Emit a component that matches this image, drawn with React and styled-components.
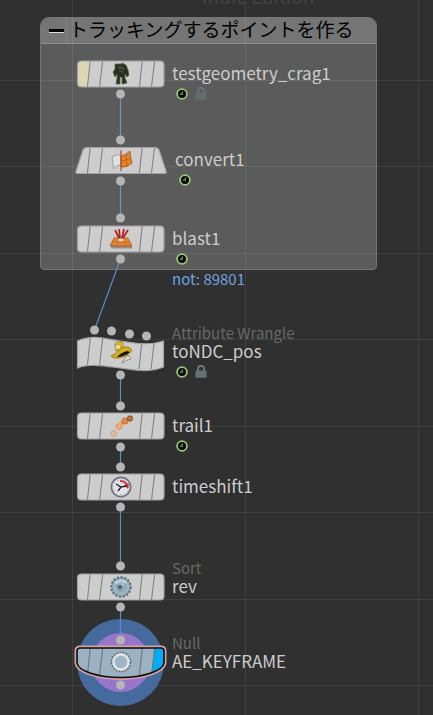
import React from "react";
import styled, { createGlobalStyle } from "styled-components";

const Global = createGlobalStyle`
  * { box-sizing: border-box; }
  body { margin: 0; background: #303030; font-family: "Noto Sans CJK JP", "Noto Sans", sans-serif; }
  button { font: inherit; border: 0; padding: 0; background: none; cursor: pointer; }
`;

const Canvas = styled.main`
  position: relative;
  min-height: 100vh;
  overflow: hidden;
  background: #303030;
`;

const Grid = styled.div`
  position: absolute;
  inset: 0;
  pointer-events: none;
  background-image:
    linear-gradient(rgba(255, 255, 255, 0.07) 1px, transparent 1px),
    linear-gradient(rgba(255, 255, 255, 0.07) 1px, transparent 1px),
    linear-gradient(90deg, rgba(255, 255, 255, 0.08) 1px, transparent 1px);
  background-size: 173px 173px;
  background-position: 0 80px, 0 166px, 72px 0;
`;

const Watermark = styled.div`
  position: absolute;
  top: -18px;
  left: 202px;
  font-size: 19px;
  line-height: 28px;
  color: #434343;
  white-space: nowrap;
`;

const NetworkBox = styled.section`
  position: absolute;
  left: 40px;
  top: 17px;
  width: 337px;
  height: 253px;
  border: 1px solid #747474;
  border-radius: 9px 9px 4px 4px;
  background: #5b5b5b;
`;

const BoxHeader = styled.header`
  display: flex;
  align-items: center;
  height: 26px;
  background: #757575;
  border-bottom: 1px solid #8e8e8e;
  border-radius: 8px 8px 0 0;
`;

const CollapseButton = styled.button`
  display: flex;
  align-items: center;
  justify-content: center;
  flex: none;
  width: 26px;
  height: 25px;
  padding-left: 5px;
  border-right: 1px solid #838383;
`;

const CollapseMark = styled.span`
  width: 15px;
  height: 4px;
  background: #000;
  border-bottom: 1px solid #ddd;
`;

const BoxTitle = styled.h1`
  margin: 0 0 4px 2px;
  font-size: 19px;
  font-weight: 400;
  line-height: 20px;
  color: #000;
  white-space: nowrap;
`;

const Wires = styled.svg`
  position: absolute;
  left: 0;
  top: 0;
  overflow: visible;
  pointer-events: none;
`;

const NodeItem = styled.article`
  position: absolute;
  left: 70px;
  top: ${(p) => p.$y}px;
`;

const NodeButton = styled.button`
  display: block;
  width: 102px;
  height: 40px;
  svg { display: block; overflow: visible; }
`;

const Label = styled.div`
  position: absolute;
  left: ${(p) => (p.$wide ? 105 : 102)}px;
  bottom: 12px;
  display: flex;
  flex-direction: column;
  white-space: nowrap;
  line-height: 18px;
  font-size: 17px;
`;

const NodeType = styled.span`
  color: #686868;
  font-size: 15px;
`;

const NodeName = styled.span`
  color: #cdcdcd;
`;

const Status = styled.div`
  position: absolute;
  left: ${(p) => (p.$wide ? 109 : 106)}px;
  top: 33px;
  display: flex;
  gap: 7px;
  align-items: center;
  height: 13px;
`;

const Info = styled.div`
  position: absolute;
  left: 102px;
  top: 50px;
  font-size: 15px;
  line-height: 20px;
  color: #72a3e0;
  white-space: nowrap;
`;

const Clock = () => (
  <svg width="12" height="12" viewBox="0 0 12 12">
    <circle cx="6" cy="6" r="4.9" fill="#050805" stroke="#98c878" strokeWidth="1.8" />
    <path d="M6.2 3.4V6.2H3.9" fill="none" stroke="#8bb870" strokeWidth="1.1" />
  </svg>
);

const Lock = ({ dim }) => (
  <svg width="12" height="13" viewBox="0 0 12 13" opacity={dim ? 0.75 : 1}>
    <path d="M3 6V3.4Q3 .9 6 .9T9 3.4V6" fill="none" stroke="#777f7f" strokeWidth="1.7" />
    <rect x=".5" y="5.5" width="11" height="7.3" rx=".5" fill="#647474" />
  </svg>
);

const RobotIcon = () => (
  <g stroke="#4f6a35" strokeWidth=".8" strokeLinejoin="round">
    <path fill="#2d2f25" d="M-6-10L0-10 1-11 5-9 7-4 8 1 6 3 4 0 4 4 6 9 1 10 1 3-1 3-1 10-5 10-4 4-4 0-6 3-8-2-6-5Z" />
    <path fill="#4b4d3f" stroke="none" d="M-3-8L2-7 4-4 1-1-2-3Z" />
    <path fill="none" stroke="#161712" d="M-4-5L4-3M0-1V3" />
  </g>
);

const ConvertIcon = () => (
  <g>
    <path d="M-9-3Q-5-6 0-5V5Q-4 4-7 9Z" fill="#dde5de" stroke="#8d958d" strokeWidth=".8" />
    <path d="M0-4Q4-4 9-9Q9-4 11 3Q6 8 0 7Z" fill="#e98527" stroke="#8c501e" strokeWidth=".8" />
    <path d="M5-6L6 6M0 1Q6 1 10-3" fill="none" stroke="#a75a19" strokeWidth=".8" />
    <path d="M0-10V11" stroke="#c44b43" strokeWidth="1.3" />
  </g>
);

const BlastIcon = () => (
  <g>
    <path d="M-10 7H11V9.500H-10Z" fill="#8e8e8e" />
    <path d="M-7-1H7L11 7H-11Z" fill="#e7842b" stroke="#a65a1c" strokeWidth=".8" />
    <path d="M-9 3H9M-3 3L-4 7M4 3L5 7" stroke="#c26a1f" strokeWidth=".7" />
    <path d="M-6-9L-2-1M-2-10L-1-1M3-10L1-1M7-9L2-1" stroke="#b51f22" strokeWidth="1.7" />
    <ellipse cy="1" rx="3.2" ry="1.8" fill="#eee0d0" stroke="#9b6c49" strokeWidth=".7" />
  </g>
);

const WrangleIcon = () => (
  <g>
    <path d="M-6-7Q-5-11-1-10 3-10 2-6L0-1-5-1Z" fill="#ddbf22" stroke="#8f7b17" strokeWidth=".8" />
    <circle cx="-3" cy="-5" r="2.8" fill="#e9dc9a" stroke="#9b8b45" strokeWidth=".6" />
    <path d="M-10 4Q-5 2-2-2 1-6 6-5 12-4 10 0 5 5-2 6-7 7-10 4Z" fill="#d6ad18" stroke="#907310" strokeWidth=".8" />
    <path d="M-4 5Q-1 1 6-1 9-1 8 1 2 5-4 5Z" fill="#161408" />
    <path d="M2 9L7 3 10 7 6 8 1 11Z" fill="#e8e8df" stroke="#77776f" strokeWidth=".8" />
  </g>
);

const TrailIcon = () => (
  <g strokeWidth=".7">
    <circle cx="-7.5" cy="7.5" r="2.8" fill="#e9b994" stroke="#bc947a" />
    <circle cx="-4.5" cy="4" r="1.6" fill="#edc7a6" stroke="none" />
    <circle cx="-2" cy="0.500" r="2.9" fill="#ecae79" stroke="#c08a60" />
    <circle cx="0.500" cy="-2.500" r="2.4" fill="#eba264" stroke="none" />
    <circle cx="4" cy="-5" r="3.1" fill="#e6873d" stroke="#b0682f" />
    <circle cx="9" cy="-7.500" r="2.7" fill="#c47236" stroke="#633d23" />
  </g>
);

const TimeIcon = () => (
  <g>
    <circle r="9.6" fill="#e3e3e7" stroke="#716f83" strokeWidth="1.8" />
    <circle r="7.5" fill="none" stroke="#9999a3" strokeWidth="1" strokeDasharray="1 2.9" />
    <path d="M-1-6Q4-6 6-2" fill="none" stroke="#ce3945" strokeWidth="2.2" />
    <path d="M3-2L8-3 7 2Z" fill="#d1333b" />
    <path d="M-5-3L0 0 6-1M0 0L-3 4" fill="none" stroke="#29262f" strokeWidth="1.4" />
  </g>
);

const SortIcon = () => (
  <g>
    <circle r="9.6" fill="#849dad" stroke="#5c7482" strokeWidth="2.4" strokeDasharray="2.3 1.4" />
    <circle r="8.6" fill="#9db4c1" />
    <path d="M-7-4Q0-11 6-5L1-1Z" fill="#bdd0da" />
    <circle r="4.2" fill="none" stroke="#8299a8" strokeWidth="1" />
    <circle cx="-1" r="2.6" fill="#637b90" />
    <circle cx="-1" r="1" fill="#34495e" />
  </g>
);

const NullIcon = () => (
  <g>
    <circle r="9.3" fill="none" stroke="#59666d" strokeWidth="2" strokeDasharray="1.7 1.3" />
    <circle r="7.6" fill="#a0b4c5" stroke="#dfe3e5" strokeWidth="2.6" />
    <circle r="5.6" fill="#9cb4c7" stroke="#b4bcc0" strokeWidth=".7" />
  </g>
);

const SHAPES = {
  rect: "M11.500 7H90Q94 7 94 11V29Q94 33 90 33H11.500Q7.500 33 7.500 29V11Q7.500 7 11.500 7Z",
  trapezoid: "M17 7.500H85Q88 7.500 89 10L96 31Q97 33.500 94 33.500H8Q5 33.500 6 31L13 10Q14 7.500 17 7.500Z",
  wave: "M7.500 9C22 2 36 7 50 9S79 14 93.500 9V35C80 41 65 38 50 36S20 31 7.500 36Z",
  bowl: "M10 6H91Q94 6 94 9V21C93 29 73 35.500 50.500 35.500S8 29 7 21V9Q7 6 10 6Z",
};

const NodeGlyph = ({ id, shape, icon: Icon, template, display }) => (
  <svg width="102" height="40" viewBox="0 0 102 40">
    <clipPath id={`clip-${id}`}>
      <path d={SHAPES[shape]} />
    </clipPath>
    {display && <path d={SHAPES[shape]} fill="none" stroke="#d9a29e" strokeWidth="5" />}
    <g clipPath={`url(#clip-${id})`}>
      <rect width="102" height="40" fill={display ? "#9cb2c3" : "#cdcdcd"} />
      {template && <path d="M0 0H21L18 40H0Z" fill="#dcd7b3" />}
      {display && <path d="M85 0H102V40H81Z" fill="#00adf5" />}
      <path d="M20.500 4L17 37M33 4L29 37M72.500 4L69 37M85 4L81 37" stroke={display ? "#667783" : "#828282"} strokeWidth="1.1" />
    </g>
    <path d={SHAPES[shape]} fill="none" stroke={display ? "#080b0d" : "#a2a2a2"} strokeWidth={display ? 1.6 : 1.2} />
    <g transform="translate(51 20)">
      <Icon />
    </g>
  </svg>
);

const NODES = [
  { y: 54, name: "testgeometry_crag1", icon: RobotIcon, shape: "rect", template: true, clock: true, lock: "dim" },
  { y: 140, name: "convert1", icon: ConvertIcon, shape: "trapezoid", wide: true, clock: true },
  { y: 219, name: "blast1", icon: BlastIcon, shape: "rect", clock: true, info: "not: 89801" },
  { y: 332, name: "toNDC_pos", type: "Attribute Wrangle", icon: WrangleIcon, shape: "wave", clock: true, lock: "full" },
  { y: 406, name: "trail1", icon: TrailIcon, shape: "rect", clock: true },
  { y: 467, name: "timeshift1", icon: TimeIcon, shape: "rect" },
  { y: 567, name: "rev", type: "Sort", icon: SortIcon, shape: "rect" },
  { y: 642, name: "AE_KEYFRAME", type: "Null", icon: NullIcon, shape: "bowl", display: true },
];

const WIRES = [
  [120, 94, 120, 140], [120, 181, 120, 218], [120, 259, 94, 330],
  [120, 375, 120, 406], [120, 447, 120, 467], [120, 507, 120, 566], [120, 607, 120, 640],
];

const PORTS = [
  [120, 94], [120, 140], [120, 181], [120, 218], [120, 259],
  [94, 330], [111, 331], [129, 334], [146, 336],
  [120, 375], [120, 406], [120, 447], [120, 467], [120, 507],
  [120, 566], [120, 607], [120, 640], [120, 685],
];

export default function App() {
  return (
    <>
      <Global />
      <Canvas>
        <Watermark>Indie Edition</Watermark>
        <NetworkBox>
          <BoxHeader>
            <CollapseButton aria-label="Collapse"><CollapseMark /></CollapseButton>
            <BoxTitle>トラッキングするポイントを作る</BoxTitle>
          </BoxHeader>
        </NetworkBox>
        <Grid />
        <Wires width="1" height="1">
          <circle cx="120.5" cy="662.5" r="43.500" fill="#456a9d" />
          <circle cx="120.5" cy="662.5" r="29.500" fill="#9875cb" />
          {WIRES.map(([x1, y1, x2, y2]) => (
            <line key={y1} x1={x1 + 0.5} y1={y1} x2={x2 + 0.5} y2={y2} stroke={y2 < 260 ? "#7294bb" : "#568bcc"} strokeWidth="1.2" />
          ))}
          {PORTS.map(([x, y]) => (
            <circle key={`${x}-${y}`} cx={x + 0.5} cy={y} r="4.500" fill="#b5b5b5" />
          ))}
        </Wires>
        {NODES.map((n) => (
          <NodeItem key={n.name} $y={n.y}>
            <NodeButton aria-label={n.name}>
              <NodeGlyph id={n.name} {...n} />
            </NodeButton>
            <Label $wide={n.wide}>
              {n.type && <NodeType>{n.type}</NodeType>}
              <NodeName>{n.name}</NodeName>
            </Label>
            {n.clock && (
              <Status $wide={n.wide}>
                <Clock />
                {n.lock && <Lock dim={n.lock === "dim"} />}
              </Status>
            )}
            {n.info && <Info>{n.info}</Info>}
          </NodeItem>
        ))}
      </Canvas>
    </>
  );
}
